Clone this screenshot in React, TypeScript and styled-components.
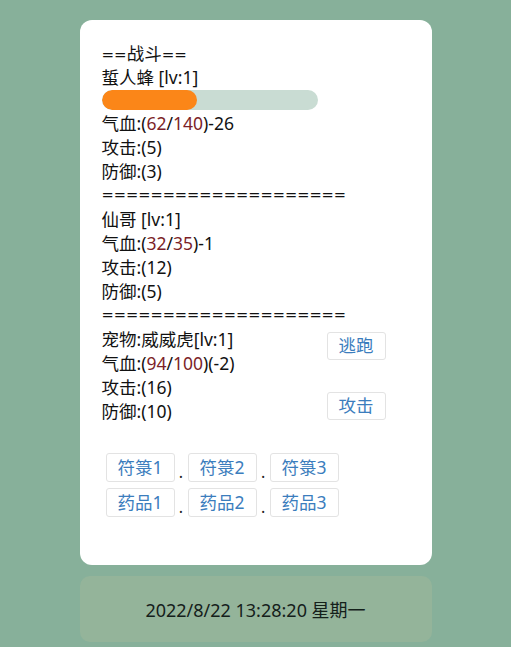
import React from "react";
import styled, { createGlobalStyle } from "styled-components";

const GlobalStyle = createGlobalStyle`
  html, body {
    margin: 0;
    padding: 0;
    background: #87b09a;
  }
  body {
    font-family: "Noto Sans", "Noto Sans CJK SC", sans-serif;
    color: #111;
  }
`;

const Page = styled.div`
  display: flex;
  flex-direction: column;
  align-items: center;
  padding-top: 20px;
  gap: 11px;
  min-height: 647px;
  box-sizing: border-box;
`;

const Card = styled.div`
  width: 352px;
  box-sizing: border-box;
  background: #fff;
  border-radius: 12px;
  padding: 21px 22px 48px 22px;
`;

const Line = styled.div`
  font-size: 17.5px;
  line-height: 24px;
  height: 24px;
  white-space: nowrap;
`;

const Eq = styled.span`
  font-family: "DejaVu Sans", sans-serif;
  font-size: 15px;
  line-height: 1;
`;

const Sep = styled(Line)`
  font-family: "DejaVu Sans", sans-serif;
  font-size: 14.6px;
`;

const Num = styled.span`
  color: #7c1f28;
`;

const BarRow = styled.div`
  height: 22px;
  display: flex;
  align-items: center;
`;

const Track = styled.div`
  width: 216px;
  height: 20px;
  border-radius: 10px;
  background: #c9dcd3;
  overflow: hidden;
`;

const Fill = styled.div`
  height: 100%;
  border-radius: 10px;
  background: #fb8618;
`;

const PetSection = styled.div`
  display: flex;
  align-items: flex-start;
`;

const PetInfo = styled.div`
  flex: 1;
`;

const Actions = styled.div`
  display: flex;
  flex-direction: column;
  gap: 32px;
  margin-top: 5px;
  margin-right: 24px;
`;

const Btn = styled.button<{ $h?: number }>`
  font-family: inherit;
  font-size: 17.5px;
  color: #3b7dbd;
  background: #fff;
  border: 1px solid #e3e3e3;
  border-radius: 3px;
  height: ${(p) => p.$h ?? 28}px;
  padding: 0 11px;
  line-height: 1;
  display: inline-flex;
  align-items: center;
  justify-content: center;
  cursor: pointer;
`;

const Items = styled.div`
  margin-top: 30px;
  margin-left: 4px;
  display: flex;
  flex-direction: column;
  gap: 6px;
`;

const ItemRow = styled.div`
  display: flex;
  align-items: flex-end;
`;

const Dot = styled.span`
  width: 13px;
  text-align: center;
  font-size: 16px;
  line-height: 20px;
  color: #222;
`;

const Footer = styled.div`
  width: 352px;
  height: 66px;
  border-radius: 10px;
  background: #94b49a;
  display: flex;
  align-items: center;
  justify-content: center;
  font-size: 18px;
  color: #14201a;
`;

const items = [
  ["符箓1", "符箓2", "符箓3"],
  ["药品1", "药品2", "药品3"],
];

export default function App() {
  const hp = 62;
  const max = 140;
  return (
    <>
      <GlobalStyle />
      <Page>
        <Card>
          <Line>
            <Eq>==</Eq>战斗<Eq>==</Eq>
          </Line>
          <Line>蜇人蜂 [lv:1]</Line>
          <BarRow>
            <Track>
              <Fill style={{ width: `${(hp / max) * 100}%` }} />
            </Track>
          </BarRow>
          <Line>
            气血:(<Num>62</Num>/<Num>140</Num>)-26
          </Line>
          <Line>攻击:(5)</Line>
          <Line>防御:(3)</Line>
          <Sep>====================</Sep>
          <Line>仙哥 [lv:1]</Line>
          <Line>
            气血:(<Num>32</Num>/<Num>35</Num>)-1
          </Line>
          <Line>攻击:(12)</Line>
          <Line>防御:(5)</Line>
          <Sep>====================</Sep>
          <PetSection>
            <PetInfo>
              <Line>宠物:威威虎[lv:1]</Line>
              <Line>
                气血:(<Num>94</Num>/<Num>100</Num>)(-2)
              </Line>
              <Line>攻击:(16)</Line>
              <Line>防御:(10)</Line>
            </PetInfo>
            <Actions>
              <Btn>逃跑</Btn>
              <Btn>攻击</Btn>
            </Actions>
          </PetSection>
          <Items>
            {items.map((row, i) => (
              <ItemRow key={i}>
                {row.map((name, j) => (
                  <React.Fragment key={name}>
                    {j > 0 && <Dot>.</Dot>}
                    <Btn $h={29}>{name}</Btn>
                  </React.Fragment>
                ))}
              </ItemRow>
            ))}
          </Items>
        </Card>
        <Footer>2022/8/22 13:28:20 星期一</Footer>
      </Page>
    </>
  );
}
